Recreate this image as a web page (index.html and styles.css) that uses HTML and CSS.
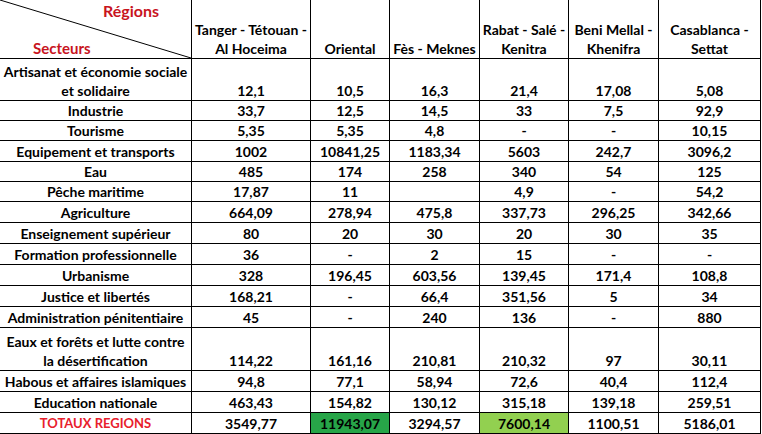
FILE: index.html
```html
<!DOCTYPE html>
<html lang="fr">
<head>
<meta charset="utf-8">
<title>Secteurs / Régions</title>
<link rel="stylesheet" href="styles.css">
</head>
<body>
<div class="sheet">
  <div class="c corner">
    <svg class="diag" width="192" height="59" viewBox="0 0 192 59"><line x1="0" y1="0" x2="191" y2="58" stroke="#000" stroke-width="1"/></svg>
    <span class="reg">Régions</span>
    <span class="sec">Secteurs</span>
  </div>
  <div class="c h">Tanger - Tétouan -<br>Al Hoceima</div>
  <div class="c h">Oriental</div>
  <div class="c h">Fès - Meknes</div>
  <div class="c h">Rabat - Salé -<br>Kenitra</div>
  <div class="c h">Beni Mellal -<br>Khenifra</div>
  <div class="c h">Casablanca -<br>Settat</div>

  <div class="c l">Artisanat et économie sociale<br>et solidaire</div>
  <div class="c">12,1</div><div class="c">10,5</div><div class="c">16,3</div><div class="c">21,4</div><div class="c">17,08</div><div class="c">5,08</div>

  <div class="c l">Industrie</div>
  <div class="c">33,7</div><div class="c">12,5</div><div class="c">14,5</div><div class="c">33</div><div class="c">7,5</div><div class="c">92,9</div>

  <div class="c l">Tourisme</div>
  <div class="c">5,35</div><div class="c">5,35</div><div class="c">4,8</div><div class="c">-</div><div class="c">-</div><div class="c">10,15</div>

  <div class="c l">Equipement et transports</div>
  <div class="c">1002</div><div class="c">10841,25</div><div class="c">1183,34</div><div class="c">5603</div><div class="c">242,7</div><div class="c">3096,2</div>

  <div class="c l">Eau</div>
  <div class="c">485</div><div class="c">174</div><div class="c">258</div><div class="c">340</div><div class="c">54</div><div class="c">125</div>

  <div class="c l">Pêche maritime</div>
  <div class="c">17,87</div><div class="c">11</div><div class="c"></div><div class="c">4,9</div><div class="c">-</div><div class="c">54,2</div>

  <div class="c l">Agriculture</div>
  <div class="c">664,09</div><div class="c">278,94</div><div class="c">475,8</div><div class="c">337,73</div><div class="c">296,25</div><div class="c">342,66</div>

  <div class="c l">Enseignement supérieur</div>
  <div class="c">80</div><div class="c">20</div><div class="c">30</div><div class="c">20</div><div class="c">30</div><div class="c">35</div>

  <div class="c l">Formation professionnelle</div>
  <div class="c">36</div><div class="c">-</div><div class="c">2</div><div class="c">15</div><div class="c">-</div><div class="c">-</div>

  <div class="c l">Urbanisme</div>
  <div class="c">328</div><div class="c">196,45</div><div class="c">603,56</div><div class="c">139,45</div><div class="c">171,4</div><div class="c">108,8</div>

  <div class="c l">Justice et libertés</div>
  <div class="c">168,21</div><div class="c">-</div><div class="c">66,4</div><div class="c">351,56</div><div class="c">5</div><div class="c">34</div>

  <div class="c l">Administration pénitentiaire</div>
  <div class="c">45</div><div class="c">-</div><div class="c">240</div><div class="c">136</div><div class="c">-</div><div class="c">880</div>

  <div class="c l">Eaux et forêts et lutte contre<br>la désertification</div>
  <div class="c">114,22</div><div class="c">161,16</div><div class="c">210,81</div><div class="c">210,32</div><div class="c">97</div><div class="c">30,11</div>

  <div class="c l">Habous et affaires islamiques</div>
  <div class="c">94,8</div><div class="c">77,1</div><div class="c">58,94</div><div class="c">72,6</div><div class="c">40,4</div><div class="c">112,4</div>

  <div class="c l">Education nationale</div>
  <div class="c">463,43</div><div class="c">154,82</div><div class="c">130,12</div><div class="c">315,18</div><div class="c">139,18</div><div class="c">259,51</div>

  <div class="c l tot">TOTAUX REGIONS</div>
  <div class="c">3549,77</div><div class="c g1">11943,07</div><div class="c">3294,57</div><div class="c g2">7600,14</div><div class="c">1100,51</div><div class="c">5186,01</div>
</div>
</body>
</html>
```
FILE: styles.css
```css
html, body {
  margin: 0;
  padding: 0;
  background: #fff;
}
.sheet {
  display: grid;
  width: 760px;
  grid-template-columns: 191px 118px 78px 89px 88px 89px 101px;
  grid-template-rows: 58px 41px 19px 19px 20px 19px 19px 20px 20px 20px 20px 20px 20px 42px 20px 20px 20px;
  gap: 1px;
  background: #000;
  border-right: 1px solid #000;
  border-bottom: 1px solid #000;
  font-family: Lato, "Liberation Sans", sans-serif;
  font-weight: 700;
  font-size: 14px;
  color: #000;
}
.c {
  background: #fff;
  display: flex;
  align-items: flex-end;
  justify-content: center;
  text-align: center;
  line-height: 19px;
  white-space: nowrap;
}
.corner {
  position: relative;
  display: block;
}
.diag {
  position: absolute;
  left: 0;
  top: 0;
}
.reg, .sec {
  position: absolute;
  color: #c8141e;
  font-size: 15px;
}
.reg {
  left: 103px;
  top: 1px;
  font-size: 16px;
  line-height: 19px;
}
.sec {
  left: 33px;
  top: 39px;
}
.tot {
  color: #e8202c;
  font-size: 13px;
}
.g1 {
  background: #27a548;
}
.g2 {
  background: #92d050;
}
```
